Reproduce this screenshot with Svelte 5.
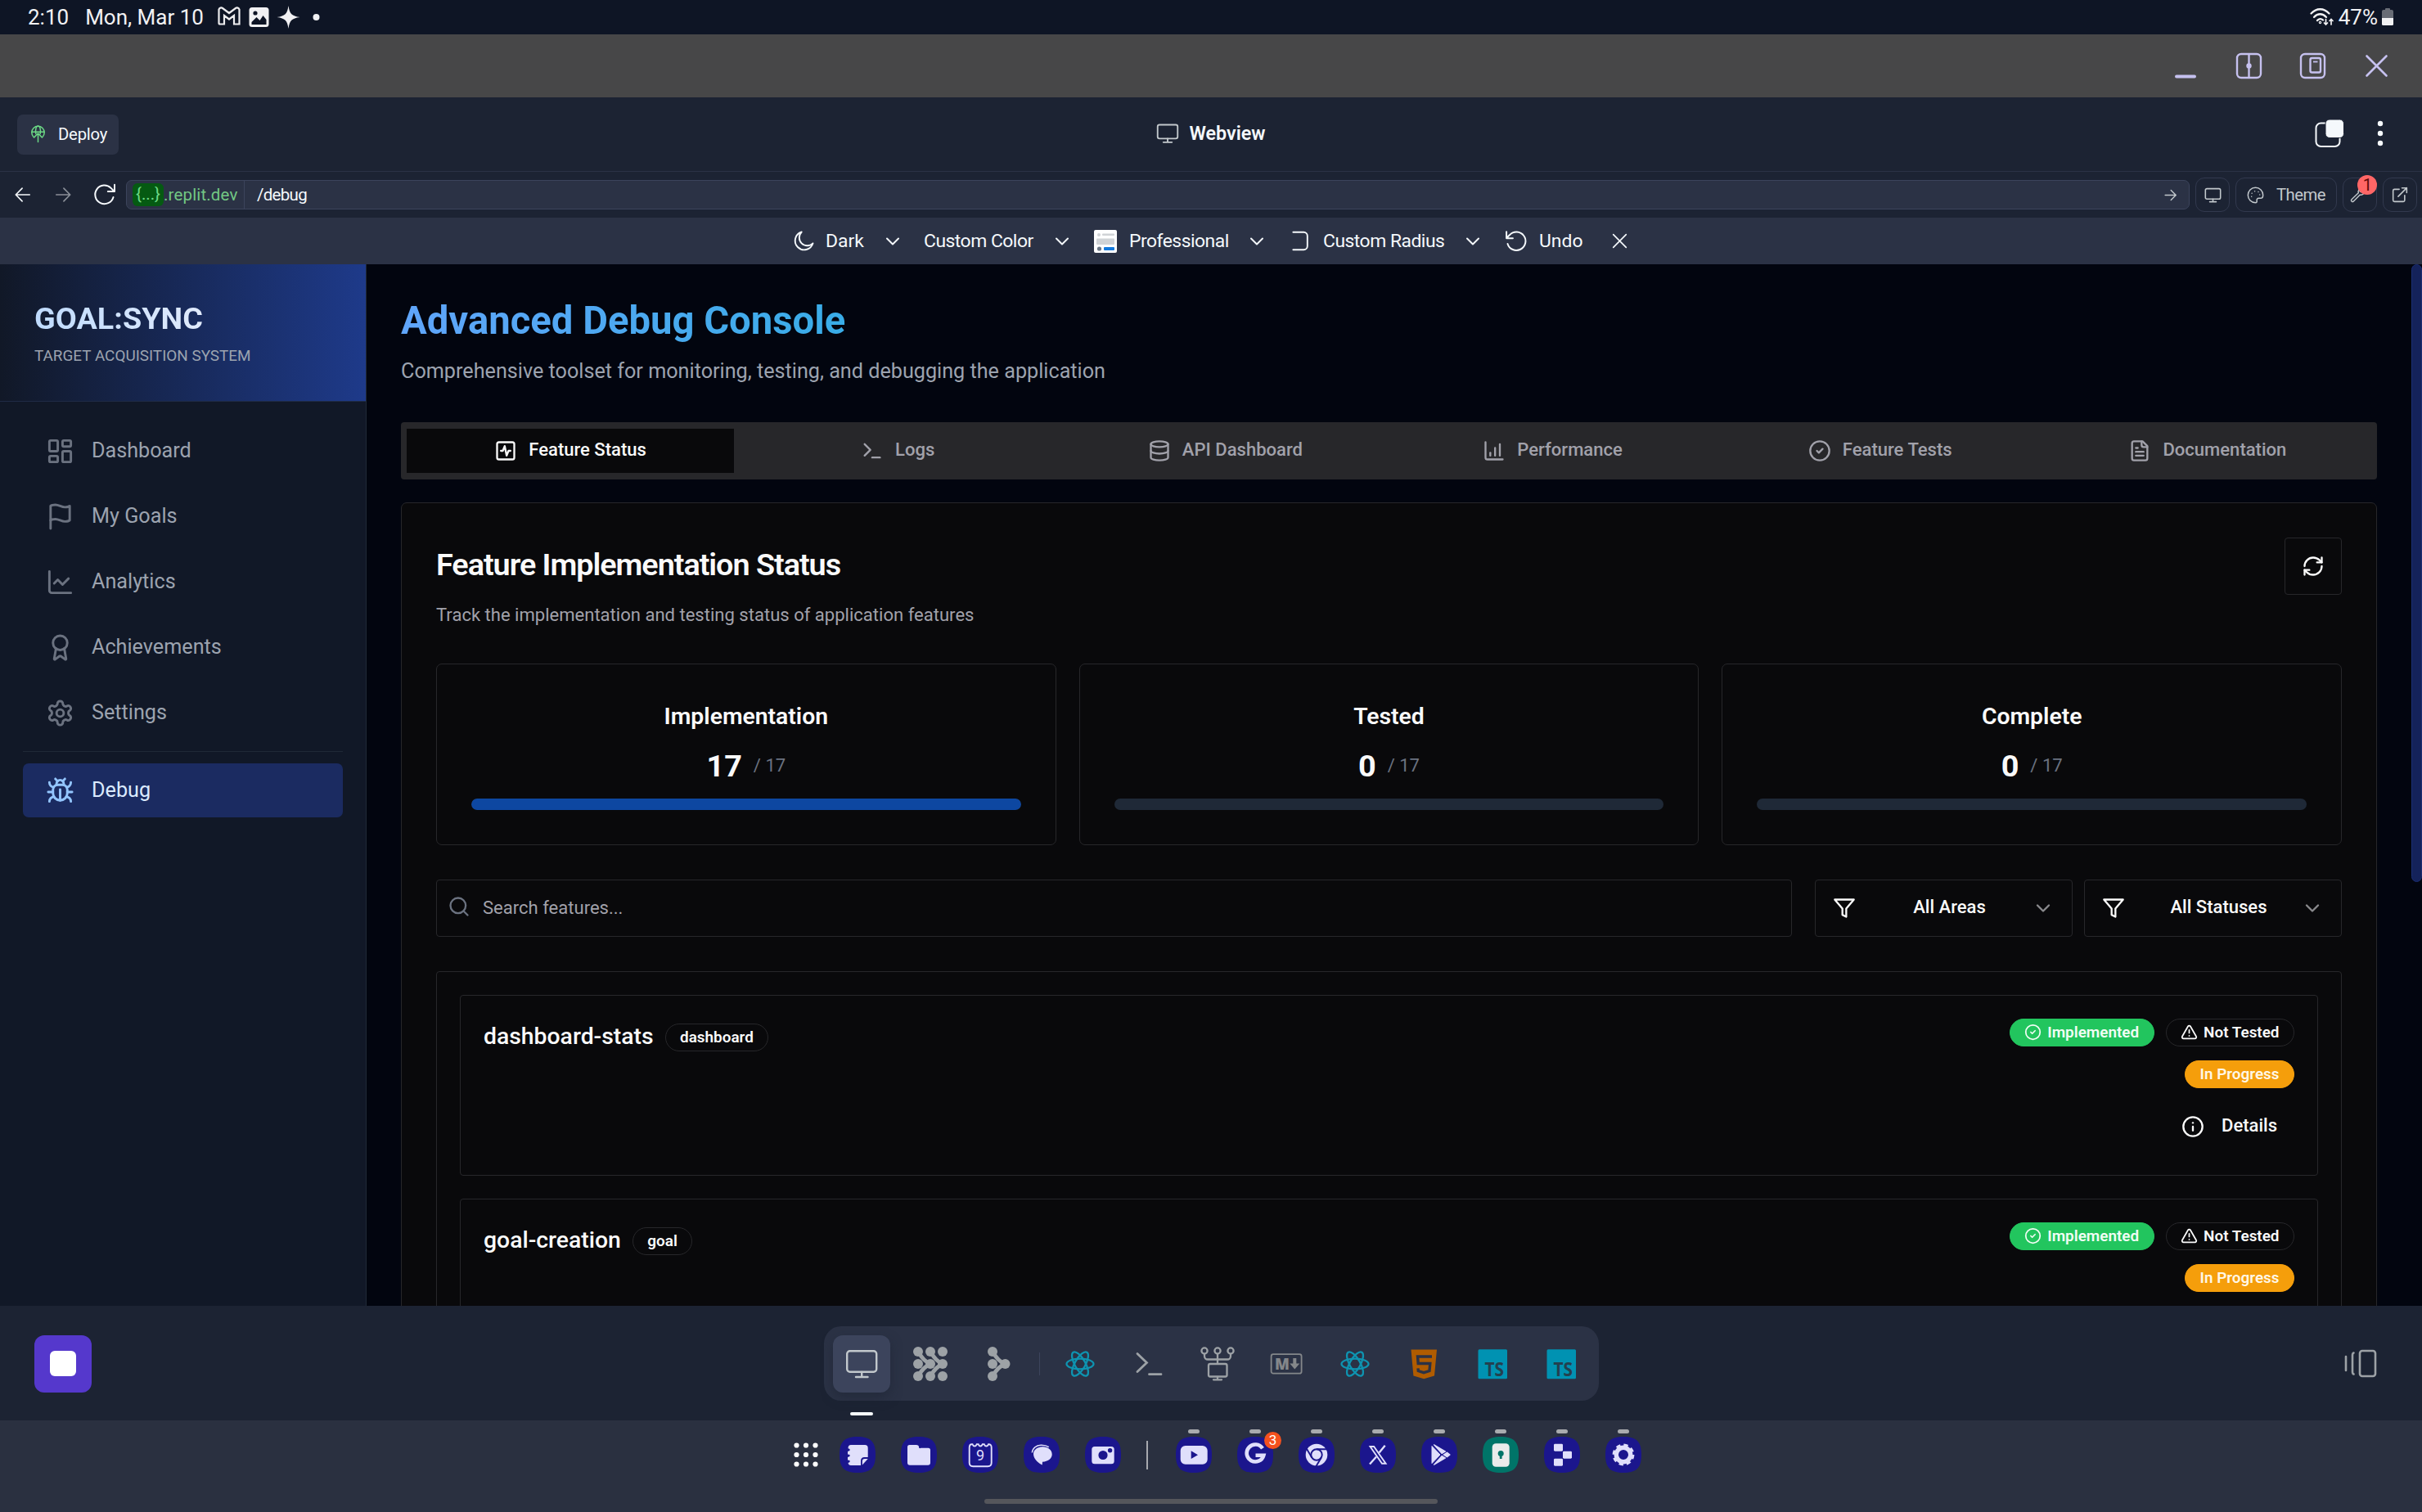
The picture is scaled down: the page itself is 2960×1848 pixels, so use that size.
<script>
  // Stroke icons on a 24-unit grid
  const icons = {
    dashboard: '<rect x="3" y="3" width="7" height="9" rx="1"/><rect x="14" y="3" width="7" height="5" rx="1"/><rect x="14" y="12" width="7" height="9" rx="1"/><rect x="3" y="16" width="7" height="5" rx="1"/>',
    flag: '<path d="M4 15s1-1 4-1 5 2 8 2 4-1 4-1V3s-1 1-4 1-5-2-8-2-4 1-4 1z"/><path d="M4 22v-7"/>',
    line: '<path d="M3 3v16a2 2 0 0 0 2 2h16"/><path d="m19 9-5 5-4-4-3 3"/>',
    award: '<circle cx="12" cy="8" r="6"/><path d="m15.477 12.89 1.515 8.526a.5.5 0 0 1-.81.47l-3.58-2.687a1 1 0 0 0-1.197 0l-3.586 2.686a.5.5 0 0 1-.81-.469l1.514-8.526"/>',
    settings: '<path d="M12.22 2h-.44a2 2 0 0 0-2 2v.18a2 2 0 0 1-1 1.73l-.43.25a2 2 0 0 1-2 0l-.15-.08a2 2 0 0 0-2.73.73l-.22.38a2 2 0 0 0 .73 2.73l.15.1a2 2 0 0 1 1 1.72v.51a2 2 0 0 1-1 1.74l-.15.09a2 2 0 0 0-.73 2.73l.22.38a2 2 0 0 0 2.73.73l.15-.08a2 2 0 0 1 2 0l.43.25a2 2 0 0 1 1 1.73V20a2 2 0 0 0 2 2h.44a2 2 0 0 0 2-2v-.18a2 2 0 0 1 1-1.73l.43-.25a2 2 0 0 1 2 0l.15.08a2 2 0 0 0 2.73-.73l.22-.39a2 2 0 0 0-.73-2.73l-.15-.08a2 2 0 0 1-1-1.74v-.5a2 2 0 0 1 1-1.74l.15-.09a2 2 0 0 0 .73-2.73l-.22-.38a2 2 0 0 0-2.73-.73l-.15.08a2 2 0 0 1-2 0l-.43-.25a2 2 0 0 1-1-1.73V4a2 2 0 0 0-2-2z"/><circle cx="12" cy="12" r="3"/>',
    bug: '<path d="m8 2 1.88 1.88"/><path d="M14.12 3.88 16 2"/><path d="M9 7.13v-1a3.003 3.003 0 1 1 6 0v1"/><path d="M12 20c-3.3 0-6-2.7-6-6v-3a4 4 0 0 1 4-4h4a4 4 0 0 1 4 4v3c0 3.300-2.700 6-6 6"/><path d="M12 20v-9"/><path d="M6.530 9C4.600 8.800 3 7.100 3 5"/><path d="M6 13H2"/><path d="M3 21c0-2.100 1.700-3.900 3.800-4"/><path d="M20.970 5c0 2.100-1.600 3.800-3.500 4"/><path d="M22 13h-4"/><path d="M17.200 17c2.100.1 3.800 1.900 3.800 4"/>',
    activity: '<rect x="3" y="3" width="18" height="18" rx="2"/><path d="M17 12h-2l-2 5-2-10-2 5H7"/>',
    terminal: '<path d="m4 17 6-6-6-6"/><path d="M12 19h8"/>',
    database: '<ellipse cx="12" cy="5" rx="9" ry="3"/><path d="M3 5V19A9 3 0 0 0 21 19V5"/><path d="M3 12A9 3 0 0 0 21 12"/>',
    bars: '<path d="M3 3v16a2 2 0 0 0 2 2h16"/><path d="M18 17V5"/><path d="M13 17V9"/><path d="M8 17v-3"/>',
    check: '<circle cx="12" cy="12" r="10"/><path d="m9 12 2 2 4-4"/>',
    file: '<path d="M15 2H6a2 2 0 0 0-2 2v16a2 2 0 0 0 2 2h12a2 2 0 0 0 2-2V7Z"/><path d="M14 2v4a2 2 0 0 0 2 2h4"/><path d="M10 9H8"/><path d="M16 13H8"/><path d="M16 17H8"/>',
    refresh: '<path d="M3 12a9 9 0 0 1 9-9 9.750 9.750 0 0 1 6.740 2.740L21 8"/><path d="M21 3v5h-5"/><path d="M21 12a9 9 0 0 1-9 9 9.750 9.750 0 0 1-6.740-2.740L3 16"/><path d="M8 16H3v5"/>',
    search: '<circle cx="11" cy="11" r="8"/><path d="m21 21-4.300-4.300"/>',
    filter: '<path d="M22 3H2l8 9.460V19l4 2v-8.540z"/>',
    chevron: '<path d="m6 9 6 6 6-6"/>',
    warn: '<path d="m21.730 18-8-14a2 2 0 0 0-3.480 0l-8 14A2 2 0 0 0 4 21h16a2 2 0 0 0 1.730-3"/><path d="M12 9v4"/><path d="M12 17h.01"/>',
    info: '<circle cx="12" cy="12" r="10"/><path d="M12 16v-4"/><path d="M12 8h.01"/>',
    deploy: '<path d="M5.800 16.500A8.800 8.800 0 1 1 18.200 16.500"/><path d="M9 12C7.700 6.500 9.500 1 12 1S16.300 6.500 15 12"/><path d="M3.300 9.500h17.400"/><path d="M12 23.500V11.500M6.500 17 12 11.500l5.500 5.500"/>',
    back: '<path d="M21 12H3M11 3.500 2.500 12l8.500 8.500"/>',
    forward: '<path d="M3 12h18M13 3.500l8.500 8.500-8.500 8.500"/>',
    reload: '<path d="M21 14.500A9.700 9.700 0 1 1 18.500 5L22 8.500M22.300 1.500v7h-7"/>',
    monitor: '<rect x="1.500" y="3" width="21" height="14.500" rx="2"/><path d="M12 17.500V21M7.500 21.300h9"/>',
    palette: '<path d="M12 1.500C6 1.500 1.500 6.200 1.500 12S6 22.500 12 22.500c1.700 0 2.200-1.300 1.900-2.500-.5-2.200.6-3.600 2.800-3.600H19c2 0 3.500-1.800 3.500-4.400C22.500 6 18 1.500 12 1.500z"/><path d="M7 9.500h.01M11 6.500h.01M16 7.500h.01M6.500 14h.01M18 11.500h.01"/>',
    wrench: '<path d="M13 8.500 2.500 18.500a2 2 0 0 0 3 3L15.500 11.500a6 6 0 0 0 7-7l-4 3-3-1-.5-3 3-2.500a6 6 0 0 0-5 7.500z"/>',
    external: '<path d="M11 4H4a2 2 0 0 0-2 2v14a2 2 0 0 0 2 2h13a2 2 0 0 0 2-2v-7M15 2h7v7M22 2 9.500 14.500"/>',
    moon: '<path d="M9.500 2.200A9.900 9.900 0 1 0 21.800 14.500 7.500 7.500 0 0 1 9.500 2.200z"/>',
    undo: '<path d="M3 14.500A9.600 9.600 0 1 0 5.200 5.200L1.800 8.600M1.800 2v6.700h6.700"/>',
    close: '<path d="M4.500 4.500l15 15M19.500 4.500l-15 15"/>',
    radius: '<path d="M3 2.500h11.500a4 4 0 0 1 4 4v11a4 4 0 0 1-4 4H3"/>'
  };

  const nav = [
    ['dashboard', 'Dashboard'],
    ['flag', 'My Goals'],
    ['line', 'Analytics'],
    ['award', 'Achievements'],
    ['settings', 'Settings']
  ];
  const tabs = [
    ['activity', 'Feature Status'],
    ['terminal', 'Logs'],
    ['database', 'API Dashboard'],
    ['bars', 'Performance'],
    ['check', 'Feature Tests'],
    ['file', 'Documentation']
  ];
  const stats = [
    { label: 'Implementation', value: 17, total: 17 },
    { label: 'Tested', value: 0, total: 17 },
    { label: 'Complete', value: 0, total: 17 }
  ];
  const features = [
    { name: 'dashboard-stats', area: 'dashboard', details: true },
    { name: 'goal-creation', area: 'goal', details: false }
  ];

  const react = '<g fill="none" stroke="#0e94b1" stroke-width="2.300"><ellipse cx="21" cy="21" rx="16.500" ry="6.400"/><ellipse cx="21" cy="21" rx="16.500" ry="6.400" transform="rotate(60 21 21)"/><ellipse cx="21" cy="21" rx="16.500" ry="6.400" transform="rotate(120 21 21)"/></g>';
  const ts = '<rect x="3.500" y="3.300" width="35.500" height="36" rx="1.500" fill="#0092b2"/><text x="35" y="35.700" text-anchor="end" font-family="Open Sans" font-weight="700" font-size="23.500" textLength="23.500" lengthAdjust="spacingAndGlyphs" fill="#24404f">TS</text>';
  const dock = [
    '<g fill="none" stroke="#c2c8cc" stroke-width="2.400" stroke-linecap="round"><rect x="3.200" y="5.200" width="36" height="25.500" rx="3.500"/><path d="M21.200 31v6M14 37h14.500"/></g>',
    '<g fill="#9da2a6"><circle cx="6" cy="6" r="6"/><circle cx="21" cy="6" r="6"/><circle cx="36" cy="6" r="6"/><circle cx="6" cy="21" r="6"/><circle cx="21" cy="21" r="6"/><circle cx="36" cy="21" r="6"/><circle cx="6" cy="36" r="6"/><circle cx="21" cy="36" r="6"/><circle cx="36" cy="36" r="6"/></g><path d="M7 7q5 10 14 14Q12 25 7 35M22 7q5 10 14 14Q27 25 22 35" fill="none" stroke="#9da2a6" stroke-width="5"/>',
    '<g fill="#9da2a6"><circle cx="13" cy="6" r="6"/><circle cx="13" cy="21" r="6"/><circle cx="13" cy="36" r="6"/><circle cx="28.500" cy="21" r="6"/></g><path d="M14 7q5 10 14 14Q19 25 14 35" fill="none" stroke="#9da2a6" stroke-width="5"/>',
    react,
    '<path d="M7 8.500 18.500 19.500 7 30.500M21.500 33.700H36" fill="none" stroke="#9da2a6" stroke-width="2.800" stroke-linecap="round"/>',
    '<g fill="none" stroke="#9da2a6" stroke-width="2.300" stroke-linecap="round"><circle cx="5" cy="5" r="3.600"/><circle cx="21" cy="5" r="3.600"/><circle cx="37" cy="5" r="3.600"/><path d="M5 9v2.500a4 4 0 0 0 4 4h24a4 4 0 0 0 4-4V9M21 9v11.500M21 37v3M16 40.300h10"/><rect x="10" y="21" width="22.500" height="15.500" rx="2"/></g>',
    '<rect x="2.600" y="9.200" width="37" height="23.500" rx="2.500" fill="none" stroke="#84878a" stroke-width="1.800"/><text x="7" y="27.800" font-family="Open Sans" font-weight="800" font-size="18.500" fill="#84878a">M</text><path d="M29.300 14h4v6.500h4l-6 7-6-7h4z" fill="#84878a"/>',
    react,
    '<path d="M5.500 3.500h31.500l-3 32-12.800 3.700-12.800-3.700z" fill="#b05c00"/><path d="M31 12H13.500l.7 8.500h14.600l-.8 9-7 2.200-6.700-2.200-.3-3.200" fill="none" stroke="#2b3245" stroke-width="3.400"/>',
    ts,
    ts
  ];

  const L = '#e0dffb';
  const B = '#1b168d';
  const pinned = [
    `<path d="M14 10h17q3.700 0 3.700 3.700V25h-4.200q-4.500 0-4.500 4.500V35H14q-3 0-3.500-3l2-1v-2l-2.500-.5V25l2.500-1v-2L10 21.500V18l2.500-1v-2l-2-.8Q10.500 10 14 10z" fill="${L}"/><path d="M27.800 34.500V30q0-3 3-3h3.900z" fill="${L}"/>`,
    `<path d="M10.500 10h8.300q3.200 0 3.200 2.500t2.500 1.200h9q2.500 0 2.500 2.500v15.500q0 3-3 3H11q-3 0-3-3v-19Q8 10 10.500 10z" fill="${L}"/>`,
    `<path d="M11.500 9.200h1q.8 2.300 2.600 2.300t2.600-2.300q1.200 0 2 0 .8 2.300 2.500 2.300t2.600-2.300h2q.8 2.300 2.600 2.300t2.600-2.300q3.700-.2 3.700 4v18.500q0 4.500-4.500 4.500h-18q-4.500 0-4.500-4.500V13.500q0-4.300 2.800-4.300z" fill="none" stroke="${L}" stroke-width="1.900"/><text x="22" y="29" text-anchor="middle" font-size="18" fill="${L}">9</text>`,
    `<path d="M23 12.300c7 0 11.700 4 11.700 9.200s-4.500 8.700-11.700 9.300l-.3 3.700c-5.500-2.500-10.700-8-10.700-13.500 0-5 4.800-8.700 11-8.700z" fill="${L}"/><path d="M10.300 19.500c.5-5.500 5-9.200 11.500-9.200 3.500 0 6.500.7 9 2.400" fill="none" stroke="${L}" stroke-width="1.400"/>`,
    `<rect x="8.300" y="12" width="27.400" height="21.300" rx="3.500" fill="${L}"/><circle cx="22" cy="22.500" r="5.600" fill="${B}"/><circle cx="30.600" cy="16.800" r="2.700" fill="${B}"/>`
  ];
  const running = [
    `<rect x="5.700" y="11" width="33" height="22.800" rx="6" fill="${L}"/><path d="M18.700 17.300v9.800l8.300-4.900z" fill="${B}"/>`,
    `<path d="M31 14.300A10.500 10.500 0 1 0 32.300 22.800H22.500" fill="none" stroke="${L}" stroke-width="4.600"/>`,
    `<circle cx="22" cy="22" r="13.300" fill="${L}"/><g fill="none" stroke="${B}" stroke-width="1.900"><circle cx="22" cy="22" r="6.700"/><path d="M22 15.300h13M16.200 25.400 9.500 14M27.800 25.400 21.500 36"/></g>`,
    `<path d="M12.500 12h4.600l14.500 20.800H27z" fill="none" stroke="${L}" stroke-width="1.900"/><path d="M30.700 10.700 23.500 19.500M20 24.500l-8 9" stroke="${L}" stroke-width="2.400"/>`,
    `<path d="M13 11.500v21L23 22z" fill="${L}" stroke="${L}" stroke-linejoin="round"/><path d="M15.500 9.800 29.500 18 25.200 20.600zM15.500 34.200 29.500 26 25.200 23.400zM31.500 19.200l3.500 2.800-3.500 2.800-4.300-2.800z" fill="${L}" stroke="${L}" stroke-width="1.200" stroke-linejoin="round"/>`,
    '<rect x="11.700" y="8.300" width="21" height="28.500" rx="4.500" fill="#ebebeb"/><circle cx="22.200" cy="20.500" r="3.500" fill="#007468"/><path d="M20.800 21h2.800v6h-2.800z" fill="#007468"/>',
    `<g fill="${L}"><rect x="12" y="8.700" width="11" height="9" rx="1.400"/><rect x="23" y="17.700" width="11" height="9" rx="1.400"/><rect x="12" y="26.700" width="11" height="9" rx="1.400"/></g>`,
    `<circle cx="22" cy="22" r="8.700" fill="none" stroke="${L}" stroke-width="5.400"/><circle cx="22" cy="22" r="11.800" fill="none" stroke="${L}" stroke-width="3.200" stroke-dasharray="5.270 4"/>`
  ];
</script>

{#snippet icon(name, size, w = 2)}
  <svg width={size} height={size} viewBox="0 0 24 24" fill="none" stroke="currentColor" stroke-width={w} stroke-linecap="round" stroke-linejoin="round">{@html icons[name]}</svg>
{/snippet}

{#snippet app(art, teal)}
  <svg width="44" height="44" viewBox="0 0 44 44"><path d="M22 0C38 0 44 6 44 22S38 44 22 44 0 38 0 22 6 0 22 0z" fill={teal ? '#007468' : B} />{@html art}</svg>
{/snippet}

<div class="screen">
  <div class="status">
    <span class="clock">2:10</span><span class="date">Mon, Mar 10</span>
    <svg width="130" height="32" viewBox="0 0 130 32">
      <path d="M3.500 21.500V6.500a3 3 0 0 1 4.500-1.500l8 6 8-6a3 3 0 0 1 4.500 1.500V24.500h-6.500V14l-6 4.500-6-4.500v10.500H5a1.500 1.500 0 0 1-1.500-1.500z" fill="none" stroke="#ececee" stroke-width="2.200" />
      <rect x="40.500" y="4" width="24" height="24" rx="3.500" fill="#f1f1f3" /><circle cx="48" cy="11" r="2.600" fill="#0e1525" /><path d="M43.500 25v-3l6-6 4 4 4-6 4 5v6z" fill="#0e1525" />
      <path d="M88.500 2c1.500 10 4 12.500 14 14-10 1.500-12.500 4-14 14-1.500-10-4-12.500-14-14 10-1.500 12.500-4 14-14z" fill="#f1f1f3" />
      <circle cx="122.500" cy="16" r="4" fill="#f1f1f3" />
    </svg>
    <span class="grow"></span>
    <svg class="wifi" width="30" height="24" viewBox="0 0 30 24" fill="none" stroke="#f1f1f3" stroke-width="2.300" stroke-linecap="round"><path d="M1.500 7.500C8 .5 17 .5 23.500 7.500M5 12c4.500-5 10.500-5 15 0M9 16c2-2.500 5-2.500 7-.5" /><circle cx="12.500" cy="18.500" r=".6" /><path d="M19.500 14.500V21m-2-2 2 2 2-2M26 21v-6.500m-2 2 2-2 2 2" stroke-width="1.700" /></svg>
    <span class="pct">47%</span>
    <svg width="14" height="22" viewBox="0 0 14 22"><path d="M4 1q0-1 1-1h4q1 0 1 1v1h2q2 0 2 2v8H0V4q0-2 2-2h2z" fill="#686c75" /><path d="M0 12h14v7.500q0 1.500-1.500 1.500h-11Q0 21 0 19.500z" fill="#f1f1f3" /></svg>
  </div>

  <div class="titlebar">
    <svg width="32" height="34" viewBox="0 0 32 34"><path d="M4 29.500h22" stroke="#c6c1ef" stroke-width="4" stroke-linecap="round" /></svg>
    <svg width="34" height="34" viewBox="0 0 34 34" fill="none" stroke="#c6c1ef" stroke-width="2.400"><rect x="2" y="2" width="29" height="29" rx="5" /><path d="M16.500 2v29" /><circle cx="16.500" cy="16.500" r="2" fill="#c6c1ef" /></svg>
    <svg width="34" height="34" viewBox="0 0 34 34" fill="none" stroke="#c6c1ef" stroke-width="2.400"><rect x="2" y="2" width="29" height="29" rx="5" /><rect x="13.500" y="7" width="12.500" height="17.500" rx="2" /><path d="M17 11.500h5.500" stroke-width="1.800" /></svg>
    <svg width="34" height="34" viewBox="0 0 34 34"><path d="m4.500 4.500 24 24m0-24-24 24" stroke="#c6c1ef" stroke-width="2.600" stroke-linecap="round" /></svg>
  </div>

  <div class="head plex">
    <div class="side"><span class="deploy"><i>{@render icon('deploy', 21, 1.7)}</i>Deploy</span></div>
    <div class="webview"><i>{@render icon('monitor', 28, 1.6)}</i>Webview</div>
    <div class="side end">
      <svg width="38" height="38" viewBox="0 0 38 38"><rect x="2.500" y="6.500" width="29" height="28.500" rx="6" fill="none" stroke="#f5f9fc" stroke-width="2" /><rect x="14" y="2" width="22.500" height="22.500" rx="5" fill="#f5f9fc" stroke="#1c2333" stroke-width="1" /></svg>
      <svg width="10" height="34" viewBox="0 0 10 34" fill="#f5f9fc"><circle cx="5" cy="5" r="3.200" /><circle cx="5" cy="17" r="3.200" /><circle cx="5" cy="29" r="3.200" /></svg>
    </div>
  </div>

  <div class="urlrow plex">
    <div class="navbtns"><i>{@render icon('back', 22, 1.8)}</i><i class="dim">{@render icon('forward', 22, 1.8)}</i><i>{@render icon('reload', 28, 1.7)}</i></div>
    <div class="url"><span class="chip">{'{...}'}</span><span class="host">.replit.dev</span><span class="path">/debug</span><span class="grow"></span><i>{@render icon('forward', 17, 2)}</i></div>
    <span class="tool sq">{@render icon('monitor', 21, 1.8)}</span>
    <span class="tool theme"><i>{@render icon('palette', 21, 1.7)}</i>Theme</span>
    <span class="tool sq wr">{@render icon('wrench', 19, 1.8)}<b class="dot">1</b></span>
    <span class="tool sq">{@render icon('external', 20, 1.9)}</span>
  </div>

  <div class="themebar plex">
    <i>{@render icon('moon', 27, 1.7)}</i><span class="t1">Dark</span><i class="c1">{@render icon('chevron', 28, 1.7)}</i>
    <span class="t2">Custom Color</span><i class="c2">{@render icon('chevron', 28, 1.7)}</i>
    <svg class="prev" width="28" height="28" viewBox="0 0 28 28"><rect width="28" height="28" rx="2" fill="#fff" /><circle cx="6" cy="6" r="2" fill="#d0d3d6" /><rect x="10" y="4.500" width="15" height="2.500" rx="1" fill="#d0d3d6" /><rect x="3" y="10.500" width="22" height="7.500" rx="1" fill="#d0d3d6" /><circle cx="6.500" cy="23" r="2.600" fill="#6b7785" /><rect x="12" y="21" width="13" height="4" rx="1" fill="#1479dc" /></svg>
    <span class="t3">Professional</span><i class="c3">{@render icon('chevron', 28, 1.7)}</i>
    <i class="rad">{@render icon('radius', 27, 1.7)}</i><span class="t4">Custom Radius</span><i class="c4">{@render icon('chevron', 28, 1.7)}</i>
    <i class="un">{@render icon('undo', 28, 1.7)}</i><span class="t5">Undo</span><i class="x">{@render icon('close', 25, 1.6)}</i>
  </div>

  <div class="work">
    <aside>
      <div class="brand"><h1>GOAL:SYNC</h1><p>TARGET ACQUISITION SYSTEM</p></div>
      <nav>
        {#each nav as [name, label]}
          <a class="item">{@render icon(name, 35)}<span>{label}</span></a>
        {/each}
        <hr />
        <a class="item on">{@render icon('bug', 35)}<span>Debug</span></a>
      </nav>
    </aside>

    <main>
      <h2>Advanced Debug Console</h2>
      <p class="sub">Comprehensive toolset for monitoring, testing, and debugging the application</p>
      <div class="tabs">
        {#each tabs as [name, label], i}
          <div class="tab" class:active={i === 0}>{@render icon(name, 28)}<span>{label}</span></div>
        {/each}
      </div>
      <section class="panel">
        <header>
          <div><h3>Feature Implementation Status</h3><p>Track the implementation and testing status of application features</p></div>
          <div class="refresh">{@render icon('refresh', 28)}</div>
        </header>
        <div class="stats">
          {#each stats as s}
            <div class="card">
              <h4>{s.label}</h4>
              <div class="num"><b>{s.value}</b><span>/ {s.total}</span></div>
              <div class="track"><div class="fill" style="width:{(s.value / s.total) * 100}%"></div></div>
            </div>
          {/each}
        </div>
        <div class="filters">
          <div class="box search"><i>{@render icon('search', 28)}</i><span>Search features...</span></div>
          <div class="box select">{@render icon('filter', 28)}<span>All Areas</span><i>{@render icon('chevron', 28)}</i></div>
          <div class="box select second">{@render icon('filter', 28)}<span>All Statuses</span><i>{@render icon('chevron', 28)}</i></div>
        </div>
        <div class="list">
          {#each features as f}
            <article>
              <div class="name"><span>{f.name}</span><span class="badge">{f.area}</span></div>
              <div class="right">
                <div class="row"><span class="badge green">{@render icon('check', 21)}Implemented</span><span class="badge alert">{@render icon('warn', 21)}Not Tested</span></div>
                <span class="badge amber">In Progress</span>
                {#if f.details}<div class="details">{@render icon('info', 28)}<span>Details</span></div>{/if}
              </div>
            </article>
          {/each}
        </div>
      </section>
      <div class="scroll"></div>
    </main>
  </div>

  <div class="dock">
    <div class="stop"><span></span></div>
    <div class="pill">
      {#each dock as art, i}
        {#if i === 3}<span class="sep"></span>{/if}
        <div class="tile" class:cur={i === 0}><svg width="42" height="42" viewBox="0 0 42 42">{@html art}</svg></div>
      {/each}
    </div>
    <svg class="panes" width="42" height="38" viewBox="0 0 42 38" fill="none" stroke="#9da2a6" stroke-width="2.600" stroke-linecap="round"><rect x="20" y="3" width="19" height="31" rx="3" /><path d="M12.500 5.500q-1.500.5-1.500 3v20q0 2.500 1.500 3M3 10v17" /></svg>
  </div>

  <div class="taskbar">
    <div class="apps">
      <svg class="grid" width="30" height="30" viewBox="0 0 30 30" fill="#fff">{#each [3.5, 15, 26.5] as y}{#each [3.5, 15, 26.5] as x}<circle cx={x} cy={y} r="3.100" />{/each}{/each}</svg>
      {#each pinned as art}<span class="app">{@render app(art)}</span>{/each}
      <span class="rule"></span>
      {#each running as art, i}
        <span class="app run">{@render app(art, i === 5)}{#if i === 1}<b class="count">3</b>{/if}</span>
      {/each}
    </div>
    <div class="gesture"></div>
  </div>
</div>

<style>
  :global(body) { background: #02050f; }
  * { box-sizing: border-box; }
  h1, h2, h3, h4, p { margin: 0; }
  i { display: flex; font-style: normal; }
  svg { display: block; flex: none; overflow: visible; }
  .grow { flex: 1; }
  .screen { width: 2960px; height: 1848px; overflow: hidden; display: flex; flex-direction: column; font-family: Roboto, sans-serif; white-space: nowrap; }
  .plex { color: #f5f9fc; }

  .status { height: 42px; flex: none; background: #0e1525; color: #f1f1f3; display: flex; align-items: center; padding: 0 35px 0 34px; font-size: 26px; }
  .status .date { margin: 0 15px 0 20px; }
  .wifi { margin-right: 5px; }
  .pct { margin-right: 5px; }
  .titlebar { height: 77px; flex: none; background: #474748; display: flex; justify-content: flex-end; align-items: center; gap: 44px; padding-right: 38px; }

  .head { height: 90px; flex: none; background: #1c2333; display: flex; align-items: center; padding: 0 46px 0 21px; }
  .side { flex: 1; display: flex; align-items: center; }
  .end { justify-content: flex-end; gap: 38px; padding-bottom: 2px; }
  .deploy { height: 49px; width: 124px; border-radius: 7px; background: #2b3245; display: flex; align-items: center; font-size: 20.3px; letter-spacing: -0.2px; padding: 0 0 1px 15px; }
  .deploy i { color: #6cd985; margin-right: 14px; }
  .webview { display: flex; align-items: center; gap: 12px; font-size: 23.3px; font-weight: 600; padding: 0 0 2px 25px; }
  .webview i { color: #c2c8cc; }

  .urlrow { height: 57px; flex: none; background: #1c2333; border-top: 1px solid #2b3245; display: flex; align-items: center; gap: 7px; padding: 0 6px 0 17px; }
  .navbtns { width: 130px; display: flex; align-items: center; gap: 26.5px; }
  .dim { color: #8a8f98; }
  .url { flex: 1; height: 36px; background: #2b3245; border: 1px solid #3c445c; border-radius: 7px; display: flex; align-items: center; padding: 0 14px 0 7px; font-size: 20.5px; }
  .url i { color: #c2c8cc; }
  .chip { width: 38px; height: 28px; line-height: 26px; border-radius: 6px; background: #055a12; color: #6cd985; text-align: center; }
  .host { color: #72c784; height: 34px; line-height: 34px; border-right: 1px solid #3c445c; width: 99px; letter-spacing: 0.15px; }
  .path { padding-left: 15px; letter-spacing: -0.7px; }
  .tool { height: 42px; border: 1px solid #32394e; border-radius: 11px; display: flex; align-items: center; justify-content: center; color: #c2c8cc; position: relative; font-size: 20.3px; letter-spacing: -0.5px; }
  .sq { width: 42px; }
  .wr { padding-right: 5px; }
  .theme { width: 124px; gap: 15px; }
  .dot { position: absolute; left: 17px; top: -4px; width: 24px; height: 24px; border-radius: 50%; background: #ff6666; color: #5c0606; font-weight: 400; font-size: 20px; line-height: 24px; text-align: center; }

  .themebar { height: 57px; flex: none; background: #2b3245; display: flex; align-items: center; padding-left: 969px; font-size: 22.9px; letter-spacing: -0.5px; }
  .t1 { width: 48px; margin-left: 13px; } .c1 { margin-left: 20px; }
  .t2 { width: 134px; margin-left: 24px; } .c2 { margin-left: 21px; }
  .prev { margin-left: 25px; }
  .t3 { width: 122px; margin-left: 15px; } .c3 { margin-left: 20px; }
  .rad { margin-left: 27px; } .t4 { width: 149px; margin-left: 13px; } .c4 { margin-left: 20px; }
  .un { margin-left: 25px; } .t5 { width: 52px; margin-left: 14px; letter-spacing: 0; } .x { margin-left: 34px; }
  .t1 { letter-spacing: 0; }

  .work { height: 1273px; flex: none; display: flex; overflow: hidden; }
  aside { width: 448px; flex: none; background: #111827; border-right: 1px solid #1f2937; }
  .brand { height: 168px; padding: 44px 42px 0; background: linear-gradient(90deg, #111827, #1e3a8a); border-bottom: 1px solid #1f2b45; }
  .brand h1 { width: max-content; font-size: 37.8px; line-height: 44px; font-weight: 700; background: linear-gradient(90deg, #bfdbfe, #e0eafc); -webkit-background-clip: text; background-clip: text; color: transparent; }
  .brand p { font-size: 18.9px; line-height: 24px; margin-top: 12px; color: #9ca3af; }
  nav { padding: 27px 28px; }
  .item { height: 66px; margin-bottom: 14px; border-radius: 7px; display: flex; align-items: center; gap: 21px; padding-left: 28px; color: #6b7280; font-size: 25.2px; }
  .item span { color: #9ca3af; padding-bottom: 2px; }
  hr { border: 0; height: 1px; background: #1f2937; margin: 0 0 14px; }
  .item.on { background: #1b2b61; color: #93c5fd; width: 391px; }
  .item.on span { color: #dbeafe; }

  main { flex: 1; position: relative; background: #02050f; padding: 42px 55px 0 42px; }
  h2 { width: 861px; font-size: 47.25px; line-height: 55px; font-weight: 700; background: linear-gradient(90deg, #60a5fa, #22b1dc); -webkit-background-clip: text; background-clip: text; color: transparent; }
  .sub { font-size: 25.2px; line-height: 42px; margin-top: 13px; color: #9ca3af; }
  .tabs { margin-top: 41px; height: 70px; border-radius: 4px; background: #27272a; padding: 7px; display: grid; grid-template-columns: repeat(6, 1fr); align-items: center; }
  .tab { height: 54px; display: flex; align-items: center; justify-content: center; gap: 14px; color: #a1a1aa; font-size: 22.05px; font-weight: 500; }
  .tab span { padding-bottom: 4px; }
  .active { background: #09090b; color: #fafafa; }
  .panel { margin-top: 28px; height: 1200px; border: 1px solid #27272a; border-radius: 7px; background: #09090b; padding: 42px; color: #fafafa; }
  header { display: flex; justify-content: space-between; height: 111px; }
  h3 { font-size: 37.8px; line-height: 66px; font-weight: 600; letter-spacing: -1.03px; }
  header p { margin-top: 11px; font-size: 22.05px; line-height: 35px; color: #a1a1aa; }
  .refresh { width: 70px; height: 70px; border: 1px solid #27272a; border-radius: 4px; display: flex; align-items: center; justify-content: center; }
  .stats { margin-top: 43px; display: grid; grid-template-columns: repeat(3, 1fr); gap: 28px; }
  .card { height: 222px; border: 1px solid #27272a; border-radius: 7px; padding: 44px 42px 0; }
  h4 { text-align: center; font-size: 28.35px; line-height: 40px; font-weight: 600; }
  .num { margin-top: 16px; height: 48px; display: flex; justify-content: center; align-items: center; gap: 14px; line-height: 48px; }
  .num b { font-size: 37.8px; font-weight: 700; }
  .num span { font-size: 22.05px; color: #6b7280; }
  .track { margin-top: 16px; height: 14px; border-radius: 7px; background: #1f2937; overflow: hidden; }
  .fill { height: 100%; border-radius: 7px; background: #0d47a1; }
  .filters { margin-top: 42px; display: flex; }
  .box { height: 70px; border: 1px solid #27272a; border-radius: 4px; display: flex; align-items: center; font-size: 22.05px; }
  .search { flex: 1; padding-left: 13px; color: #6b7280; }
  .search i { padding-bottom: 5px; }
  .search span { color: #a1a1aa; margin-left: 15px; padding-bottom: 1px; }
  .select { width: 315px; margin-left: 28px; padding: 0 21px 0 21px; font-weight: 500; }
  .select span { flex: 1; text-align: center; padding: 0 0 4px 14px; }
  .select i { color: #8a8a8d; }
  .second { margin-left: 14px; }
  .list { margin-top: 42px; height: 620px; border: 1px solid #27272a; border-radius: 4px; padding: 28px; }
  article { height: 221px; margin-bottom: 28px; border: 1px solid #27272a; border-radius: 4px; padding: 28px; display: flex; justify-content: space-between; }
  .name { display: flex; align-items: center; height: 46px; gap: 14px; font-size: 28.35px; font-weight: 500; }
  .name > span:first-child { padding-bottom: 3px; }
  .badge { height: 34px; border: 1px solid #27272a; border-radius: 17px; padding: 0 17.5px 1px; display: flex; align-items: center; gap: 7px; font-size: 18.9px; font-weight: 600; }
  .right { display: flex; flex-direction: column; align-items: flex-end; }
  .row { display: flex; gap: 14px; }
  .green { background: #22c55e; border-color: #22c55e; color: #f0fdf4; }
  .amber { background: #f59e0b; border-color: #f59e0b; color: #fff7e6; margin-top: 17px; }
  .details { display: flex; align-items: center; gap: 21px; margin: 33px 21px 0 0; font-size: 22.05px; font-weight: 500; }
  .details span { padding-bottom: 3px; }
  .scroll { position: absolute; right: 0; top: 0; width: 13px; height: 755px; border-radius: 7px; background: #14225a; border: 1px solid #1a2d72; }

  .dock { height: 140px; flex: none; background: #1c2333; display: flex; align-items: center; padding: 0 54px 0 42px; }
  .stop { width: 70px; height: 70px; border-radius: 12px; background: #5538cc; display: flex; align-items: center; justify-content: center; margin-top: 1px; }
  .stop span { width: 32px; height: 31px; border-radius: 6px; background: #fff; }
  .pill { width: 947px; height: 91px; border-radius: 21px; background: #2b3245; display: flex; align-items: center; gap: 14px; padding: 0 11px; margin: 1px 0 0 895px; }
  .tile { width: 70px; height: 70px; border-radius: 12px; display: flex; align-items: center; justify-content: center; position: relative; flex: none; }
  .cur { background: #3c445c; box-shadow: 0 6px 14px #1c233388; }
  .cur::after { content: ''; position: absolute; left: 21px; top: 94px; width: 28px; height: 4px; border-radius: 2px; background: #f5f9fc; }
  .sep { width: 1px; height: 28px; background: #3c445c; flex: none; }
  .panes { margin: 2px 0 0 auto; }

  .taskbar { height: 112px; flex: none; background: #2a3040; display: flex; flex-direction: column; align-items: center; padding-top: 20px; }
  .apps { display: flex; align-items: center; height: 44px; gap: 31px; margin-left: 16px; }
  .grid { margin-right: -5px; }
  .app { position: relative; display: block; width: 44px; height: 44px; }
  .rule { width: 2px; height: 35px; background: #a7a9ae; margin-right: 3px; }
  .run::before { content: ''; position: absolute; left: 15px; top: -9px; width: 14px; height: 4.500px; border-radius: 3px; background: #a9abae; }
  .count { position: absolute; left: 33px; top: -6px; width: 21px; height: 21px; border-radius: 50%; background: #f4511e; color: #fff; font-weight: 400; font-size: 17px; line-height: 21px; text-align: center; }
  .gesture { width: 554px; height: 6px; border-radius: 3px; background: #55565b; margin-top: 32px; }
</style>
